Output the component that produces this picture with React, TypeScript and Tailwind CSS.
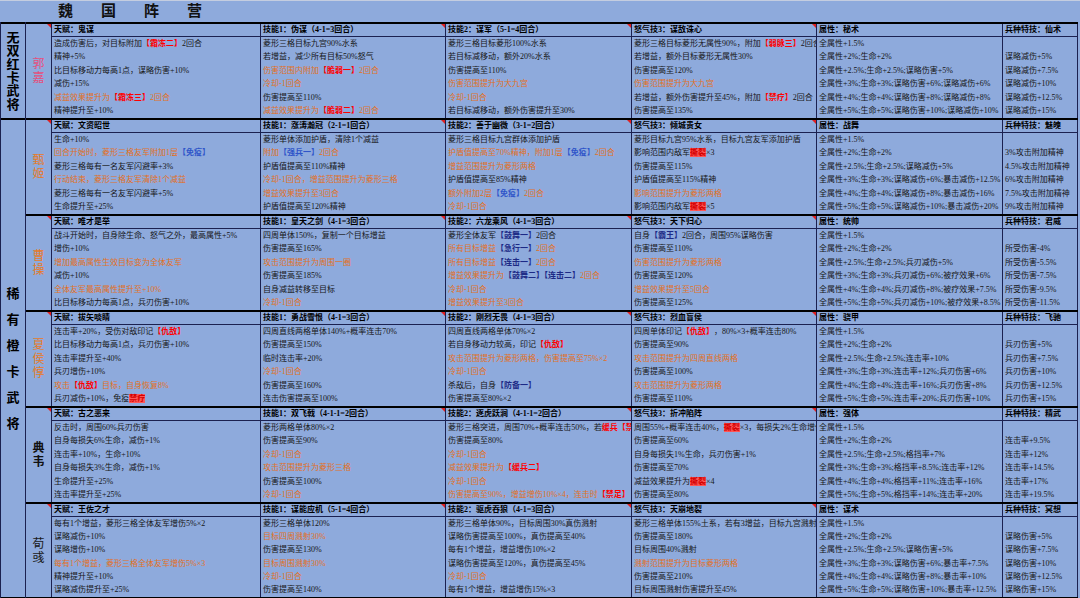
import React from "react"

type Col = { head: string; lines: string[] }
type Hero = { name: string; nameCls: string; cols: Col[] }

const widths = ["w-[209px]", "w-[185px]", "w-[186px]", "w-[185px]", "w-[186px]", "w-[75px]"]

const tone: Record<string, string> = {
  r: "font-bold text-[#ff0000]",
  b: "font-bold text-[#2f55c9]",
  v: "font-bold text-[#1d2a86]",
  h: "font-bold bg-[#ff5757] text-[#d40000]",
}

const heroes: Hero[] = [
  {
    name: "郭嘉",
    nameCls: "text-[#e4507c]",
    cols: [
      {
        head: "天赋：鬼谋",
        lines: [
          "造成伤害后，对目标附加{r:【霜冻二】}2回合",
          "精神+5%",
          "比目标移动力每高1点，谋略伤害+10%",
          "减伤+15%",
          "o|减益效果提升为{r:【霜冻三】}2回合",
          "精神提升至+10%",
        ],
      },
      {
        head: "技能1：伪谋（4-1=3回合）",
        lines: [
          "菱形三格目标九宫90%水系",
          "若增益，减少所有目标50%怒气",
          "o|伤害范围内附加{r:【脆弱一】}2回合",
          "o|冷却-1回合",
          "伤害提高至110%",
          "o|减益效果提升为{r:【脆弱二】}2回合",
        ],
      },
      {
        head: "技能2：谋军（5-1=4回合）",
        lines: [
          "菱形三格目标菱形100%水系",
          "若目标减移动，额外20%水系",
          "伤害提高至110%",
          "o|伤害范围提升为大九宫",
          "o|冷却-1回合",
          "若目标减移动，额外伤害提升至30%",
        ],
      },
      {
        head: "怒气技3：谋敌诛心",
        lines: [
          "菱形三格目标菱形无属性90%，附加{r:【弱脉三】}2回合",
          "若增益，额外目标菱形无属性30%",
          "伤害提高至120%",
          "o|伤害范围提升为大九宫",
          "若增益，额外伤害提升至45%，附加{r:【禁疗】}2回合",
          "伤害提高至135%",
        ],
      },
      {
        head: "属性：秘术",
        lines: [
          "全属性+1.5%",
          "全属性+2%;生命+2%",
          "全属性+2.5%;生命+2.5%;谋略伤害+5%",
          "全属性+3%;生命+3%;谋略伤害+6%;谋略减伤+6%",
          "全属性+4%;生命+4%;谋略伤害+8%;谋略减伤+8%",
          "全属性+5%;生命+5%;谋略伤害+10%;谋略减伤+10%",
        ],
      },
      {
        head: "兵种特技：仙术",
        lines: ["", "谋略减伤+5%", "谋略减伤+7.5%", "谋略减伤+10%", "谋略减伤+12.5%", "谋略减伤+15%"],
      },
    ],
  },
  {
    name: "甄姬",
    nameCls: "text-[#e67a28]",
    cols: [
      {
        head: "天赋：文资昭世",
        lines: [
          "生命+10%",
          "o|回合开始时，菱形三格友军附加1层{b:【免疫】}",
          "菱形三格每有一名友军闪避率+3%",
          "o|行动结束，菱形三格友军清除1个减益",
          "菱形三格每有一名友军闪避率+5%",
          "生命提升至+25%",
        ],
      },
      {
        head: "技能1：涨涛瀚冠（2-1=1回合）",
        lines: [
          "菱形单体添加护盾，清除1个减益",
          "o|附加{b:【强兵一】}2回合",
          "护盾值提高至110%精神",
          "o|冷却-1回合，增益范围提升为菱形三格",
          "o|增益效果提升至3回合",
          "护盾值提高至120%精神",
        ],
      },
      {
        head: "技能2：善于幽微（3-1=2回合）",
        lines: [
          "菱形三格目标九宫群体添加护盾",
          "o|护盾值提高至70%精神，附加1层{b:【免疫】}2回合",
          "o|增益范围提升为菱形两格",
          "护盾值提高至85%精神",
          "o|额外附加2层{b:【免疫】}2回合",
          "o|冷却-1回合",
        ],
      },
      {
        head: "怒气技3：倾城贵女",
        lines: [
          "菱形目标九宫95%水系，目标九宫友军添加护盾",
          "影响范围内敌军{h:撕裂}×3",
          "伤害提高至115%",
          "护盾值提高至115%精神",
          "o|影响范围提升为菱形两格",
          "影响范围内敌军{h:撕裂}×5",
        ],
      },
      {
        head: "属性：战舞",
        lines: [
          "全属性+1.5%",
          "全属性+2%;生命+2%",
          "全属性+2.5%;生命+2.5%;谋略减伤+5%",
          "全属性+3%;生命+3%;谋略减伤+6%;暴击减伤+12.5%",
          "全属性+4%;生命+4%;谋略减伤+8%;暴击减伤+16%",
          "全属性+5%;生命+5%;谋略减伤+10%;暴击减伤+20%",
        ],
      },
      {
        head: "兵种特技：魅魄",
        lines: ["", "3%攻击附加精神", "4.5%攻击附加精神", "6%攻击附加精神", "7.5%攻击附加精神", "9%攻击附加精神"],
      },
    ],
  },
  {
    name: "曹操",
    nameCls: "text-[#e67a28]",
    cols: [
      {
        head: "天赋：唯才是举",
        lines: [
          "战斗开始时，自身除生命、怒气之外，最高属性+5%",
          "增伤+10%",
          "o|增加最高属性生效目标变为全体友军",
          "减伤+10%",
          "o|全体友军最高属性提升至+10%",
          "比目标移动力每高1点，兵刃伤害+10%",
        ],
      },
      {
        head: "技能1：皇天之剑（4-1=3回合）",
        lines: [
          "四周单体150%，复制一个目标增益",
          "伤害提高至165%",
          "o|攻击范围提升为周围一圈",
          "伤害提高至185%",
          "自身减益转移至目标",
          "o|冷却-1回合",
        ],
      },
      {
        head: "技能2：六龙乘风（4-1=3回合）",
        lines: [
          "菱形全体友军{v:【鼓舞一】}2回合",
          "o|所有目标增益{v:【急行一】}2回合",
          "o|所有目标增益{v:【连击一】}2回合",
          "o|增益效果提升为{v:【鼓舞二】}{v:【连击二】}2回合",
          "o|冷却-1回合",
          "o|增益效果提升至3回合",
        ],
      },
      {
        head: "怒气技3：天下归心",
        lines: [
          "自身{v:【霸王】}2回合，周围95%谋略伤害",
          "伤害提高至110%",
          "o|伤害范围提升为菱形两格",
          "伤害提高至120%",
          "o|增益效果提升至5回合",
          "伤害提高至125%",
        ],
      },
      {
        head: "属性：统帅",
        lines: [
          "全属性+1.5%",
          "全属性+2%;生命+2%",
          "全属性+2.5%;生命+2.5%;兵刃减伤+5%",
          "全属性+3%;生命+3%;兵刃减伤+6%;被疗效果+6%",
          "全属性+4%;生命+4%;兵刃减伤+8%;被疗效果+7.5%",
          "全属性+5%;生命+5%;兵刃减伤+10%;被疗效果+8.5%",
        ],
      },
      {
        head: "兵种特技：君威",
        lines: ["", "所受伤害-4%", "所受伤害-5.5%", "所受伤害-7.5%", "所受伤害-9.5%", "所受伤害-11.5%"],
      },
    ],
  },
  {
    name: "夏侯惇",
    nameCls: "text-[#e67a28]",
    cols: [
      {
        head: "天赋：拔矢啖睛",
        lines: [
          "连击率+20%，受伤对敌印记{r:【仇敌】}",
          "比目标移动力每高1点，兵刃伤害+10%",
          "连击率提升至+40%",
          "兵刃增伤+10%",
          "o|攻击{r:【仇敌】}目标，自身恢复8%",
          "兵刃减伤+10%，免疫{h:禁疗}",
        ],
      },
      {
        head: "技能1：勇战雪恨（4-1=3回合）",
        lines: [
          "四周直线两格单体140%+概率连击70%",
          "伤害提高至150%",
          "临时连击率+20%",
          "o|冷却-1回合",
          "伤害提高至160%",
          "连击伤害提高至100%",
        ],
      },
      {
        head: "技能2：刚烈无畏（4-1=3回合）",
        lines: [
          "四周直线两格单体70%×2",
          "若自身移动力较高，印记{r:【仇敌】}",
          "o|攻击范围提升为菱形两格，伤害提高至75%×2",
          "o|冷却-1回合",
          "杀敌后，自身{v:【防备一】}",
          "伤害提高至80%×2",
        ],
      },
      {
        head: "怒气技3：烈血盲侯",
        lines: [
          "四周单体印记{r:【仇敌】}，80%×3+概率连击80%",
          "伤害提高至90%",
          "o|攻击范围提升为四周直线两格",
          "伤害提高至100%",
          "o|攻击范围提升为菱形两格",
          "伤害提高至110%",
        ],
      },
      {
        head: "属性：骁甲",
        lines: [
          "全属性+1.5%",
          "全属性+2%;生命+2%",
          "全属性+2.5%;生命+2.5%;连击率+10%",
          "全属性+3%;生命+3%;连击率+12%;兵刃伤害+6%",
          "全属性+4%;生命+4%;连击率+16%;兵刃伤害+8%",
          "全属性+5%;生命+5%;连击率+20%;兵刃伤害+10%",
        ],
      },
      {
        head: "兵种特技：飞驰",
        lines: ["", "兵刃伤害+5%", "兵刃伤害+7.5%", "兵刃伤害+10%", "兵刃伤害+12.5%", "兵刃伤害+15%"],
      },
    ],
  },
  {
    name: "典韦",
    nameCls: "text-[#111111] font-bold",
    cols: [
      {
        head: "天赋：古之恶来",
        lines: [
          "反击时，周围60%兵刃伤害",
          "自身每损失6%生命，减伤+1%",
          "连击率+10%，生命+10%",
          "自身每损失3%生命，减伤+1%",
          "生命提升至+25%",
          "连击率提升至+25%",
        ],
      },
      {
        head: "技能1：双飞戟（4-1-1=2回合）",
        lines: [
          "菱形两格单体80%×2",
          "伤害提高至90%",
          "o|冷却-1回合",
          "o|攻击范围提升为菱形三格",
          "伤害提高至100%",
          "o|冷却-1回合",
        ],
      },
      {
        head: "技能2：逐虎跃涧（4-1-1=2回合）",
        lines: [
          "菱形三格突进，周围70%+概率连击50%，若{r:缓兵}{r:【禁足】}",
          "伤害提高至80%",
          "o|冷却-1回合",
          "o|减益效果提升为{r:【缓兵二】}",
          "o|冷却-1回合",
          "o|伤害提高至90%，增益增伤10%×4，连击时{r:【禁足】}",
        ],
      },
      {
        head: "怒气技3：折冲陷阵",
        lines: [
          "周围55%+概率连击40%，{h:撕裂}×3，每损失2%生命增伤1%",
          "伤害提高至60%",
          "自身每损失1%生命，兵刃伤害+1%",
          "伤害提高至70%",
          "减益效果提升为{h:撕裂}×4",
          "伤害提高至80%",
        ],
      },
      {
        head: "属性：强体",
        lines: [
          "全属性+1.5%",
          "全属性+2%;生命+2%",
          "全属性+2.5%;生命+2.5%;格挡率+7%",
          "全属性+3%;生命+3%;格挡率+8.5%;连击率+12%",
          "全属性+4%;生命+4%;格挡率+11%;连击率+16%",
          "全属性+5%;生命+5%;格挡率+14%;连击率+20%",
        ],
      },
      {
        head: "兵种特技：精武",
        lines: ["", "连击率+9.5%", "连击率+12%", "连击率+14.5%", "连击率+17%", "连击率+19.5%"],
      },
    ],
  },
  {
    name: "荀彧",
    nameCls: "text-[#1a1a1a]",
    cols: [
      {
        head: "天赋：王佐之才",
        lines: [
          "每有1个增益，菱形三格全体友军增伤5%×2",
          "谋略减伤+10%",
          "谋略增伤+10%",
          "o|每有1个增益，菱形三格全体友军增伤5%×3",
          "精神提升至+10%",
          "谋略减伤提升至+25%",
        ],
      },
      {
        head: "技能1：谋能应机（5-1=4回合）",
        lines: [
          "菱形三格单体120%",
          "o|目标四周溅射30%",
          "伤害提高至130%",
          "o|目标周围溅射30%",
          "o|冷却-1回合",
          "伤害提高至140%",
        ],
      },
      {
        head: "技能2：驱虎吞狼（4-1=3回合）",
        lines: [
          "菱形三格单体90%，目标周围30%真伤溅射",
          "谋略伤害提高至100%，真伤提高至40%",
          "每有1个增益，增益增伤10%×2",
          "谋略伤害提高至120%，真伤提高至45%",
          "o|冷却-1回合",
          "每有1个增益，增益增伤15%×3",
        ],
      },
      {
        head: "怒气技3：天崩地裂",
        lines: [
          "菱形三格单体155%土系，若有3增益，目标九宫溅射50%",
          "伤害提高至180%",
          "目标周围40%溅射",
          "o|溅射范围提升为目标菱形两格",
          "伤害提高至210%",
          "目标周围溅射伤害提升至45%",
        ],
      },
      {
        head: "属性：谋术",
        lines: [
          "全属性+1.5%",
          "全属性+2%;生命+2%",
          "全属性+2.5%;生命+2.5%;谋略伤害+5%",
          "全属性+3%;生命+3%;谋略伤害+6%;暴击率+7.5%",
          "全属性+4%;生命+4%;谋略伤害+8%;暴击率+10%",
          "全属性+5%;生命+5%;谋略伤害+10%;暴击率+12.5%",
        ],
      },
      {
        head: "兵种特技：冥想",
        lines: ["", "谋略伤害+5%", "谋略伤害+7.5%", "谋略伤害+10%", "谋略伤害+12.5%", "谋略伤害+15%"],
      },
    ],
  },
]

function renderLine(line: string) {
  let base = "text-[#161616]"
  let s = line
  if (s.startsWith("o|")) {
    base = "text-[#e2701e]"
    s = s.slice(2)
  }
  const parts: React.ReactNode[] = []
  const re = /\{(\w+):([^}]*)\}/g
  let last = 0
  let m: RegExpExecArray | null
  while ((m = re.exec(s))) {
    if (m.index > last) parts.push(<span key={last}>{s.slice(last, m.index)}</span>)
    parts.push(
      <span key={m.index + "t"} className={tone[m[1]]}>
        {m[2]}
      </span>
    )
    last = re.lastIndex
  }
  if (last < s.length) parts.push(<span key={last}>{s.slice(last)}</span>)
  return <span className={base}>{parts}</span>
}

// little red comment marker in a cell corner
function Mark() {
  return <span className="absolute top-0 right-0 w-0 h-0 border-t-[4px] border-l-[4px] border-t-[#e02020] border-l-transparent" />
}

function Cell({ col, w, mark }: { col: Col; w: string; mark: boolean }) {
  return (
    <div className={`${w} flex flex-col border-r border-[#1b2150]`}>
      <div className="relative h-[13px] border-b border-[#1b2150] flex items-center pl-[2px] text-[8px] font-bold leading-none text-black whitespace-nowrap overflow-hidden">
        {col.head}
        {mark && <Mark />}
      </div>
      <div className="flex-1 flex flex-col">
        {col.lines.map((l, i) => (
          <div key={i} className="flex-1 flex items-center pl-[2px] text-[8px] leading-none whitespace-nowrap overflow-hidden">
            {renderLine(l)}
          </div>
        ))}
      </div>
    </div>
  )
}

function HeroRow({ hero, last }: { hero: Hero; last: boolean }) {
  return (
    <div className={`h-[96px] flex border-t-2 border-black ${last ? "border-b" : ""}`}>
      <div className="relative w-[26px] border-r border-[#1b2150] flex flex-col items-center justify-center">
        {hero.name.split("").map((c) => (
          <span key={c} className={`text-[12px] leading-[14px] ${hero.nameCls}`}>
            {c}
          </span>
        ))}
        <Mark />
      </div>
      {hero.cols.map((c, i) => (
        <Cell key={i} col={c} w={widths[i]} mark={i >= 1 && i <= 3} />
      ))}
    </div>
  )
}

export default function App() {
  return (
    <div className="w-[1080px] h-[598px] overflow-hidden bg-[#8eaadc] font-['Liberation_Serif','Noto_Sans_CJK_SC',sans-serif] text-[#161616]">
      <div className="h-[22px] border-t border-[#c4cde0] flex items-center pl-[58px] gap-[28px] text-[15px] font-bold text-[#111]">
        <span>魏</span>
        <span>国</span>
        <span>阵</span>
        <span>营</span>
      </div>
      <div className="flex border-l border-[#1b2150]">
        <div className="w-[25px] flex flex-col border-r border-[#1b2150]">
          <div className="h-[96px] border-t-2 border-black flex flex-col items-center justify-center text-[13px] leading-[13.3px] font-bold text-black">
            {"无双红卡武将".split("").map((c, i) => (
              <span key={i}>{c}</span>
            ))}
          </div>
          <div className="flex-1 border-t-2 border-b border-black flex flex-col items-center justify-center gap-[13px] text-[13px] leading-[13px] font-bold text-black">
            {"稀有橙卡武将".split("").map((c, i) => (
              <span key={i}>{c}</span>
            ))}
          </div>
        </div>
        <div className="flex flex-col">
          {heroes.map((h, i) => (
            <HeroRow key={h.name} hero={h} last={i === heroes.length - 1} />
          ))}
        </div>
      </div>
    </div>
  )
}
